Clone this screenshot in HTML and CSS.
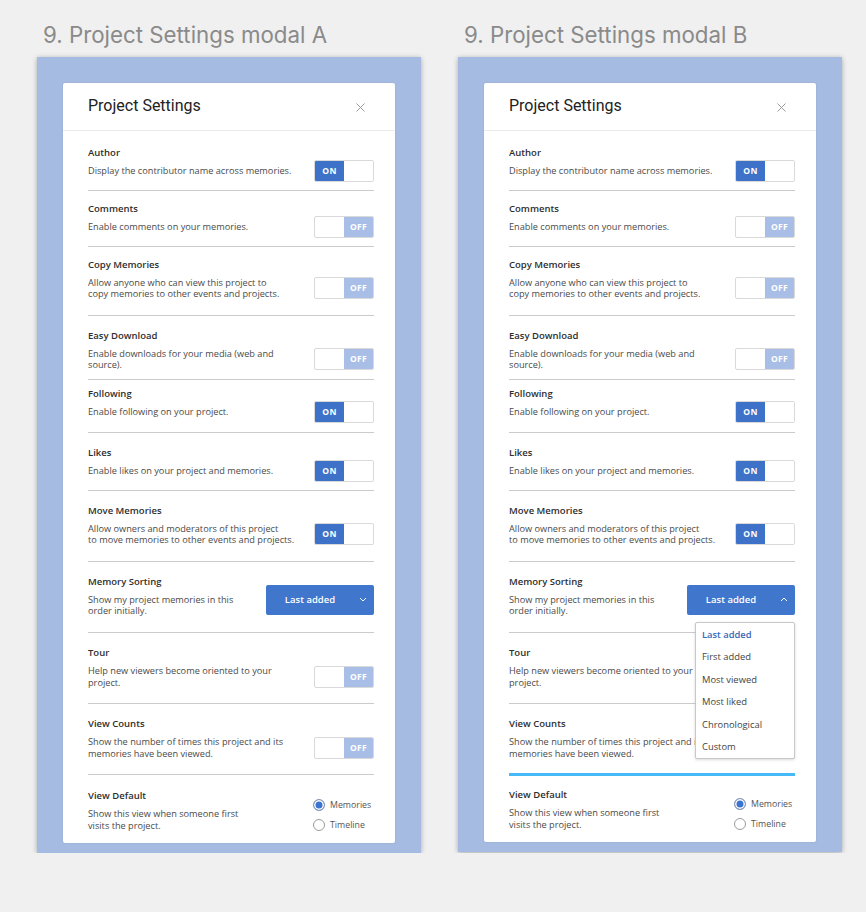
FILE: index.html
```html
<!DOCTYPE html>
<html lang="en">
<head>
    <meta charset="UTF-8">
    <meta name="viewport" content="width=device-width, initial-scale=1.0">
    <title>Project Settings modal</title>
    <link rel="stylesheet" href="styles.css">
</head>
<body>
    <div class="boards">

        <!-- Variant A: select closed -->
        <section class="board">
            <h2 class="board-title">9. Project Settings modal A</h2>
            <div class="panel">
                <div class="modal">
                    <div class="modal-header">
                        <h1>Project Settings</h1>
                        <svg class="close" width="9" height="9" viewBox="0 0 9 9"><path d="M0.5 0.5 L8.5 8.5 M8.5 0.5 L0.5 8.5" stroke="#9a9a9a" stroke-width="1"/></svg>
                    </div>

                    <div class="row row-first">
                        <div class="row-title">Author</div>
                        <div class="row-body">
                            <p class="row-desc">Display the contributor name across memories.</p>
                            <div class="toggle is-on"><span>ON</span><span></span></div>
                        </div>
                    </div>
                    <div class="row row-snug">
                        <div class="row-title">Comments</div>
                        <div class="row-body">
                            <p class="row-desc">Enable comments on your memories.</p>
                            <div class="toggle"><span></span><span>OFF</span></div>
                        </div>
                    </div>
                    <div class="row row-snug row-two">
                        <div class="row-title">Copy Memories</div>
                        <div class="row-body">
                            <p class="row-desc">Allow anyone who can view this project to<br>copy memories to other events and projects.</p>
                            <div class="toggle"><span></span><span>OFF</span></div>
                        </div>
                    </div>
                    <div class="row row-short-bottom">
                        <div class="row-title">Easy Download</div>
                        <div class="row-body">
                            <p class="row-desc">Enable downloads for your media (web and<br>source).</p>
                            <div class="toggle"><span></span><span>OFF</span></div>
                        </div>
                    </div>
                    <div class="row row-short-top">
                        <div class="row-title">Following</div>
                        <div class="row-body">
                            <p class="row-desc">Enable following on your project.</p>
                            <div class="toggle is-on"><span>ON</span><span></span></div>
                        </div>
                    </div>
                    <div class="row">
                        <div class="row-title">Likes</div>
                        <div class="row-body">
                            <p class="row-desc">Enable likes on your project and memories.</p>
                            <div class="toggle is-on"><span>ON</span><span></span></div>
                        </div>
                    </div>
                    <div class="row row-two">
                        <div class="row-title">Move Memories</div>
                        <div class="row-body">
                            <p class="row-desc">Allow owners and moderators of this project<br>to move memories to other events and projects.</p>
                            <div class="toggle is-on"><span>ON</span><span></span></div>
                        </div>
                    </div>
                    <div class="row row-two">
                        <div class="row-title">Memory Sorting</div>
                        <div class="row-body">
                            <p class="row-desc">Show my project memories in this<br>order initially.</p>
                            <div class="select">
                                <div class="select-button">
                                    <span class="select-label">Last added</span>
                                    <svg class="chevron" width="8" height="5" viewBox="0 0 8 5"><path d="M1 1 L4 4 L7 1" fill="none" stroke="#fff" stroke-width="1"/></svg>
                                </div>
                            </div>
                        </div>
                    </div>
                    <div class="row row-two">
                        <div class="row-title">Tour</div>
                        <div class="row-body">
                            <p class="row-desc">Help new viewers become oriented to your<br>project.</p>
                            <div class="toggle"><span></span><span>OFF</span></div>
                        </div>
                    </div>
                    <div class="row row-two">
                        <div class="row-title">View Counts</div>
                        <div class="row-body">
                            <p class="row-desc">Show the number of times this project and its<br>memories have been viewed.</p>
                            <div class="toggle"><span></span><span>OFF</span></div>
                        </div>
                    </div>
                    <div class="row row-last">
                        <div class="row-title">View Default</div>
                        <div class="row-body">
                            <p class="row-desc">Show this view when someone first<br>visits the project.</p>
                            <div class="radio-group">
                                <label class="radio is-checked"><span class="radio-dot"></span>Memories</label>
                                <label class="radio"><span class="radio-dot"></span>Timeline</label>
                            </div>
                        </div>
                    </div>
                </div>
            </div>
        </section>

        <!-- Variant B: select open, drop indicator on View Counts -->
        <section class="board">
            <h2 class="board-title">9. Project Settings modal B</h2>
            <div class="panel">
                <div class="modal">
                    <div class="modal-header">
                        <h1>Project Settings</h1>
                        <svg class="close" width="9" height="9" viewBox="0 0 9 9"><path d="M0.5 0.5 L8.5 8.5 M8.5 0.5 L0.5 8.5" stroke="#9a9a9a" stroke-width="1"/></svg>
                    </div>

                    <div class="row row-first">
                        <div class="row-title">Author</div>
                        <div class="row-body">
                            <p class="row-desc">Display the contributor name across memories.</p>
                            <div class="toggle is-on"><span>ON</span><span></span></div>
                        </div>
                    </div>
                    <div class="row row-snug">
                        <div class="row-title">Comments</div>
                        <div class="row-body">
                            <p class="row-desc">Enable comments on your memories.</p>
                            <div class="toggle"><span></span><span>OFF</span></div>
                        </div>
                    </div>
                    <div class="row row-snug row-two">
                        <div class="row-title">Copy Memories</div>
                        <div class="row-body">
                            <p class="row-desc">Allow anyone who can view this project to<br>copy memories to other events and projects.</p>
                            <div class="toggle"><span></span><span>OFF</span></div>
                        </div>
                    </div>
                    <div class="row row-short-bottom">
                        <div class="row-title">Easy Download</div>
                        <div class="row-body">
                            <p class="row-desc">Enable downloads for your media (web and<br>source).</p>
                            <div class="toggle"><span></span><span>OFF</span></div>
                        </div>
                    </div>
                    <div class="row row-short-top">
                        <div class="row-title">Following</div>
                        <div class="row-body">
                            <p class="row-desc">Enable following on your project.</p>
                            <div class="toggle is-on"><span>ON</span><span></span></div>
                        </div>
                    </div>
                    <div class="row">
                        <div class="row-title">Likes</div>
                        <div class="row-body">
                            <p class="row-desc">Enable likes on your project and memories.</p>
                            <div class="toggle is-on"><span>ON</span><span></span></div>
                        </div>
                    </div>
                    <div class="row row-two">
                        <div class="row-title">Move Memories</div>
                        <div class="row-body">
                            <p class="row-desc">Allow owners and moderators of this project<br>to move memories to other events and projects.</p>
                            <div class="toggle is-on"><span>ON</span><span></span></div>
                        </div>
                    </div>
                    <div class="row row-two row-raised">
                        <div class="row-title">Memory Sorting</div>
                        <div class="row-body">
                            <p class="row-desc">Show my project memories in this<br>order initially.</p>
                            <div class="select is-open">
                                <div class="select-button">
                                    <span class="select-label">Last added</span>
                                    <svg class="chevron" width="8" height="5" viewBox="0 0 8 5"><path d="M1 4 L4 1 L7 4" fill="none" stroke="#fff" stroke-width="1"/></svg>
                                </div>
                                <ul class="select-menu">
                                    <li class="is-selected">Last added</li>
                                    <li>First added</li>
                                    <li>Most viewed</li>
                                    <li>Most liked</li>
                                    <li>Chronological</li>
                                    <li>Custom</li>
                                </ul>
                            </div>
                        </div>
                    </div>
                    <div class="row row-two">
                        <div class="row-title">Tour</div>
                        <div class="row-body">
                            <p class="row-desc">Help new viewers become oriented to your<br>project.</p>
                            <div class="toggle"><span></span><span>OFF</span></div>
                        </div>
                    </div>
                    <div class="row row-two row-drop">
                        <div class="row-title">View Counts</div>
                        <div class="row-body">
                            <p class="row-desc">Show the number of times this project and its<br>memories have been viewed.</p>
                            <div class="toggle"><span></span><span>OFF</span></div>
                        </div>
                    </div>
                    <div class="row row-last">
                        <div class="row-title">View Default</div>
                        <div class="row-body">
                            <p class="row-desc">Show this view when someone first<br>visits the project.</p>
                            <div class="radio-group">
                                <label class="radio is-checked"><span class="radio-dot"></span>Memories</label>
                                <label class="radio"><span class="radio-dot"></span>Timeline</label>
                            </div>
                        </div>
                    </div>
                </div>
            </div>
        </section>

    </div>
</body>
</html>
```

FILE: styles.css
```css
body {
    margin: 0;
    padding: 22px 0 0 37px;
    background-color: #f0f0f0;
    font-family: "Open Sans", "Liberation Sans", Arial, sans-serif;
    color: #333;
}
.boards {
    display: flex;
    gap: 37px;
}
.board {
    width: 384px;
}
.board-title {
    margin: 0 0 9px;
    padding-left: 6px;
    font-family: Inter, "Liberation Sans", Arial, sans-serif;
    font-size: 22.3px;
    font-weight: 400;
    line-height: 26px;
    color: #8a8a8a;
}
.panel {
    padding: 26px 26px 10px;
    background-color: #a6bbe2;
    box-shadow: 0 1px 5px rgba(0, 0, 0, 0.3);
}
.modal {
    background-color: #fff;
    border-radius: 2px;
    box-shadow: 0 0 2px rgba(0, 0, 0, 0.12);
}
.modal-header {
    display: flex;
    align-items: center;
    justify-content: space-between;
    height: 47px;
    padding: 0 30px 0 25px;
    border-bottom: 1px solid #ececec;
}
.modal-header h1 {
    margin: 0 0 3px;
    font-family: Roboto, "Liberation Sans", Arial, sans-serif;
    font-size: 16px;
    font-weight: 400;
    color: #222;
}
.close {
    display: block;
    margin-top: 2px;
}

/* settings rows */
.row {
    margin: 0 21px 0 25px;
    padding: 12px 0 13px;
    border-bottom: 1px solid #cbcbcb;
}
.row-first {
    padding-top: 14px;
}
.row-snug {
    padding-top: 10px;
}
.row-two {
    padding-bottom: 15.4px;
}
.row-short-bottom {
    padding-bottom: 8.4px;
}
.row-short-top {
    padding-top: 6px;
    padding-bottom: 14px;
}
.row-last {
    padding-top: 13px;
    padding-bottom: 12.5px;
    border-bottom: none;
}
.row-drop {
    position: relative;
    border-bottom: none;
}
.row-drop::after {
    content: "";
    position: absolute;
    left: 0;
    right: 0;
    bottom: -2px;
    height: 3px;
    background-color: #45baf7;
}
.row-raised {
    position: relative;
    z-index: 2;
}
.row-title {
    margin-bottom: 4px;
    font-size: 9.5px;
    font-weight: 600;
    line-height: 16px;
    color: #2e2e2e;
}
.row-body {
    display: flex;
    align-items: center;
    justify-content: space-between;
}
.row-desc {
    margin: 0;
    font-size: 9.2px;
    line-height: 11.3px;
    color: #4a4a4a;
}

/* toggle */
.toggle {
    display: flex;
    width: 60px;
    height: 22px;
    margin: -5px 0;
    border: 1px solid #d9d9d9;
    border-radius: 2px;
    box-sizing: border-box;
    overflow: hidden;
}
.toggle span {
    flex: 1;
    font-size: 8.5px;
    font-weight: 700;
    line-height: 20px;
    text-align: center;
    color: #fff;
    letter-spacing: 0.3px;
}
.toggle span:last-child {
    background-color: #a8bee6;
}
.toggle.is-on span:first-child {
    background-color: #3d72c8;
}
.toggle.is-on span:last-child {
    background-color: #fff;
}

/* select */
.select {
    position: relative;
    width: 108px;
    margin: -9px 0 2px;
}
.select-button {
    display: flex;
    align-items: center;
    height: 30px;
    background-color: #4076cb;
    border-radius: 2px;
    color: #fff;
}
.select-label {
    flex: 1;
    font-size: 9.5px;
    font-weight: 600;
    text-align: center;
}
.chevron {
    display: block;
    margin: 0 7px 0 5px;
}
.select-menu {
    position: absolute;
    top: 37px;
    right: 0;
    width: 100px;
    box-sizing: border-box;
    margin: 0;
    padding: 1px 0 0;
    list-style: none;
    background-color: #fff;
    border: 1px solid #c8c8c8;
    border-radius: 2px;
    box-shadow: 0 1px 3px rgba(0, 0, 0, 0.15);
}
.select-menu li {
    padding-left: 6px;
    font-size: 9.4px;
    line-height: 22.4px;
    color: #444;
}
.select-menu li.is-selected {
    font-weight: 600;
    color: #3a68b8;
}

/* radios */
.radio-group {
    width: 61px;
    margin: -14px 0 -4px;
}
.radio {
    display: flex;
    align-items: center;
    gap: 5px;
    font-size: 8.8px;
    line-height: 20px;
    color: #555;
}
.radio-dot {
    width: 12px;
    height: 12px;
    border: 1px solid #9c9c9c;
    border-radius: 50%;
    box-sizing: border-box;
    background-color: #fff;
}
.radio.is-checked .radio-dot {
    border-color: #8b9ab3;
    background-color: #3b74d0;
    box-shadow: inset 0 0 0 1.5px #fff;
}
```
